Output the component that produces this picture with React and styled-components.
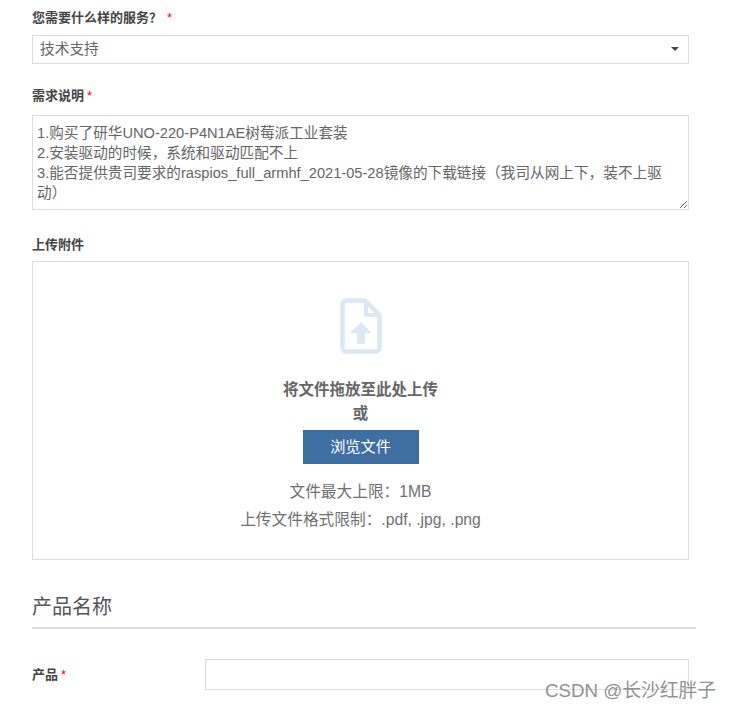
import styled, { createGlobalStyle } from "styled-components";

const GlobalStyle = createGlobalStyle`
html, body {
  margin: 0;
  padding: 0;
  background: #fff;
  overflow: hidden;
}
* {
  box-sizing: border-box;
}
`;

const fontStack = `"Liberation Sans", "Noto Sans CJK SC", sans-serif`;

const Page = styled.div`
  position: relative;
  width: 730px;
  height: 710px;
  overflow: hidden;
  padding: 10px 34px 0 32px;
  font-family: ${fontStack};
  color: #666;
`;

const Field = styled.div`
  display: flex;
  flex-direction: column;
  width: 657px;
  margin-bottom: ${(p) => p.$gap || 0}px;
`;

const Label = styled.label`
  display: block;
  font-size: 13px;
  line-height: 16px;
  font-weight: 700;
  color: #444;
  margin-bottom: ${(p) => p.$gap || 0}px;
`;

const Star = styled.span`
  color: #f00;
  margin-left: ${(p) => p.$gap || 3}px;
  font-weight: 400;
`;

const SelectBox = styled.div`
  display: flex;
  align-items: center;
  justify-content: space-between;
  height: 29px;
  padding: 0 9px 5px 7px;
  border: 1px solid #dcdcdc;
  font-size: 14.7px;
  color: #666;
`;

const Caret = styled.span`
  width: 0;
  height: 0;
  margin-top: 4px;
  border-left: 4.5px solid transparent;
  border-right: 4.5px solid transparent;
  border-top: 4px solid #444;
`;

const TextArea = styled.textarea`
  display: block;
  width: 657px;
  height: 95px;
  padding: 7px 20px 7px 4px;
  border: 1px solid #dcdcdc;
  border-radius: 0;
  outline: none;
  font-family: ${fontStack};
  font-size: 14.65px;
  line-height: 20px;
  color: #666;
  resize: both;
  overflow: hidden;
`;

const DropZone = styled.div`
  display: flex;
  flex-direction: column;
  align-items: center;
  height: 299px;
  padding-top: 36px;
  border: 1px solid #dcdcdc;
`;

const FileIcon = styled.svg`
  display: block;
  width: 42px;
  height: 56px;
  margin-bottom: 24px;
`;

const DropTitle = styled.div`
  font-size: 15.5px;
  line-height: 24px;
  font-weight: 700;
  color: #666;
`;

const BrowseButton = styled.button`
  width: 116px;
  height: 34px;
  margin: 4px 0 14px;
  padding: 0 0 4px;
  border: 1px solid #3a6c9e;
  border-radius: 0;
  background: #3f6fa0;
  color: #fff;
  font-family: ${fontStack};
  font-size: 15.2px;
`;

const Hint = styled.div`
  font-size: 15.7px;
  line-height: 28px;
  color: #707070;
`;

const SectionTitle = styled.h2`
  margin: 0;
  padding: 0 0 6px;
  width: 664px;
  font-size: 20px;
  line-height: 28px;
  font-weight: 400;
  color: #555;
  border-bottom: 2px solid #dcdcdc;
`;

const ProductRow = styled.div`
  display: grid;
  grid-template-columns: 173px 484px;
  align-items: center;
  margin-top: 30px;
`;

const TextInput = styled.input`
  height: 31px;
  width: 484px;
  border: 1px solid #dcdcdc;
  border-radius: 0;
  outline: none;
`;

const Watermark = styled.div`
  position: absolute;
  left: 545px;
  top: 679px;
  font-size: 18.75px;
  line-height: 24px;
  color: #929292;
  white-space: nowrap;
`;

const description = `1.购买了研华UNO-220-P4N1AE树莓派工业套装
2.安装驱动的时候，系统和驱动匹配不上
3.能否提供贵司要求的raspios_full_armhf_2021-05-28镜像的下载链接（我司从网上下，装不上驱动）`;

export default function App() {
  return (
    <Page>
      <GlobalStyle />
      <Field $gap={24}>
        <Label $gap={9}>
          您需要什么样的服务？<Star $gap={5}>*</Star>
        </Label>
        <SelectBox>
          技术支持
          <Caret />
        </SelectBox>
      </Field>
      <Field $gap={27}>
        <Label $gap={11}>
          需求说明<Star>*</Star>
        </Label>
        <TextArea readOnly defaultValue={description} />
      </Field>
      <Field $gap={33}>
        <Label $gap={8}>上传附件</Label>
        <DropZone>
          <FileIcon viewBox="0 0 42 56">
            <path
              d="M6 2.5h19L39.5 17v33a3.5 3.5 0 0 1-3.5 3.5H6A3.5 3.5 0 0 1 2.5 50V6A3.5 3.5 0 0 1 6 2.5z"
              fill="none"
              stroke="#dbe7f2"
              strokeWidth="4.5"
              strokeLinejoin="round"
            />
            <path d="M26 3v14h13z" fill="none" stroke="#dbe7f2" strokeWidth="4" strokeLinejoin="round" />
            <path d="M21 24l11 11h-7v9a2 2 0 0 1-2 2h-4a2 2 0 0 1-2-2v-9h-7z" fill="#dbe7f2" />
          </FileIcon>
          <DropTitle>将文件拖放至此处上传</DropTitle>
          <DropTitle>或</DropTitle>
          <BrowseButton>浏览文件</BrowseButton>
          <Hint>文件最大上限：1MB</Hint>
          <Hint>上传文件格式限制：.pdf, .jpg, .png</Hint>
        </DropZone>
      </Field>
      <SectionTitle>产品名称</SectionTitle>
      <ProductRow>
        <Label>
          产品<Star>*</Star>
        </Label>
        <TextInput />
      </ProductRow>
      <Watermark>CSDN @长沙红胖子</Watermark>
    </Page>
  );
}
